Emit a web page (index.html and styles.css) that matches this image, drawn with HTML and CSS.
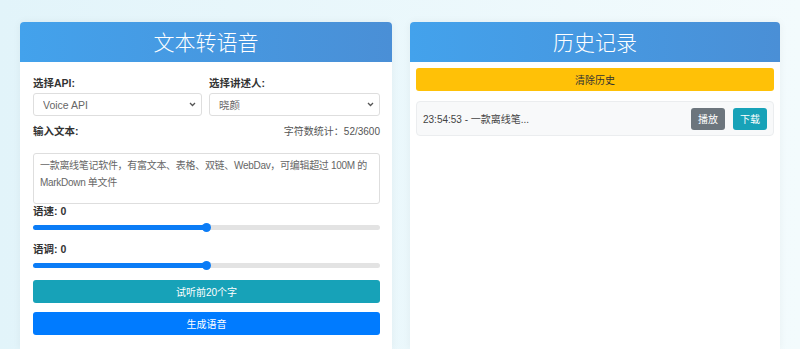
FILE: index.html
```html
<!DOCTYPE html>
<html lang="zh-CN">
<head>
    <meta charset="UTF-8">
    <meta name="viewport" content="width=device-width, initial-scale=1.0">
    <title>文本转语音</title>
    <link rel="stylesheet" href="styles.css">
</head>
<body>
    <div class="wrap">
        <!-- 左侧：文本转语音 -->
        <div class="card">
            <div class="card-head">文本转语音</div>
            <div class="card-body main-body">
                <div class="row">
                    <div class="field">
                        <label>选择API:</label>
                        <div class="select-box">
                            <select>
                                <option>Voice API</option>
                            </select>
                            <svg class="chev" width="7" height="5" viewBox="0 0 7 5"><path d="M1 1 L3.5 3.5 L6 1" fill="none" stroke="#555" stroke-width="1.3"/></svg>
                        </div>
                    </div>
                    <div class="field">
                        <label>选择讲述人:</label>
                        <div class="select-box">
                            <select>
                                <option>晓颜</option>
                            </select>
                            <svg class="chev" width="7" height="5" viewBox="0 0 7 5"><path d="M1 1 L3.5 3.5 L6 1" fill="none" stroke="#555" stroke-width="1.3"/></svg>
                        </div>
                    </div>
                </div>

                <div class="text-head">
                    <label>输入文本:</label>
                    <span class="count">字符数统计：52/3600</span>
                </div>
                <textarea class="text-input">一款离线笔记软件，有富文本、表格、双链、WebDav，可编辑超过 100M 的 MarkDown 单文件</textarea>

                <label class="range-label">语速: 0</label>
                <input type="range" class="range" min="-50" max="50" value="0">

                <label class="range-label pitch">语调: 0</label>
                <input type="range" class="range" min="-50" max="50" value="0">

                <button class="btn btn-teal btn-block">试听前20个字</button>
                <button class="btn btn-blue btn-block">生成语音</button>
            </div>
        </div>

        <!-- 右侧：历史记录 -->
        <div class="card">
            <div class="card-head">历史记录</div>
            <div class="card-body side-body">
                <button class="btn btn-yellow btn-block">清除历史</button>
                <div class="history-item">
                    <span class="history-text">23:54:53 - 一款离线笔...</span>
                    <div class="history-actions">
                        <button class="btn btn-gray btn-sm">播放</button>
                        <button class="btn btn-teal btn-sm">下载</button>
                    </div>
                </div>
            </div>
        </div>
    </div>
</body>
</html>
```

FILE: styles.css
```css
body {
    margin: 0;
    padding: 22px 20px 0;
    font-family: "Liberation Sans", "Noto Sans CJK SC", sans-serif;
    background: linear-gradient(90deg, #e2f4fa, #f3fbfd);
    color: #333;
    height: 349px;
    box-sizing: border-box;
    overflow: hidden;
}
.wrap {
    display: grid;
    grid-template-columns: 372px 370px;
    gap: 18px;
    height: 100%;
}
.card {
    background-color: white;
    border-radius: 4px 4px 0 0;
    box-shadow: 0 0 8px rgba(0, 0, 0, 0.05);
    display: flex;
    flex-direction: column;
}
.card-head {
    height: 40px;
    line-height: 39px;
    text-align: center;
    color: white;
    font-size: 21px;
    font-family: "Noto Sans CJK SC", sans-serif;
    font-weight: 300;
    background: linear-gradient(90deg, #43a2ec, #4a8fd6);
    border-radius: 4px 4px 0 0;
}
.card-body {
    flex: 1;
}
.main-body {
    padding: 12px 12px 0 13px;
}
.side-body {
    padding: 6px 6px 0;
}
label {
    display: block;
    font-size: 10.5px;
    font-weight: bold;
    color: #333;
}
.row {
    display: grid;
    grid-template-columns: 169px 171px;
    gap: 7px;
}
.field label {
    line-height: 18px;
    margin-bottom: 1px;
}
.select-box {
    position: relative;
}
.select-box select {
    width: 100%;
    height: 23px;
    appearance: none;
    -webkit-appearance: none;
    border: 1px solid #dedede;
    border-radius: 3px;
    background: white;
    font-family: inherit;
    font-size: 10.5px;
    color: #666;
    padding: 0 9px;
}
.select-box .chev {
    position: absolute;
    right: 6px;
    top: 9px;
}
.text-head {
    display: flex;
    justify-content: space-between;
    align-items: center;
    margin-top: 5px;
    height: 18px;
}
.count {
    font-size: 10px;
    color: #555;
}
.text-input {
    display: block;
    width: 100%;
    box-sizing: border-box;
    height: 51px;
    margin-top: 14px;
    border: 1px solid #dedede;
    border-radius: 3px;
    padding: 3px 6px;
    font-family: inherit;
    font-size: 10px;
    line-height: 17px;
    letter-spacing: -0.3px;
    color: #666;
    resize: none;
}
.range-label {
    line-height: 14px;
    margin-top: 0;
}
.range-label.pitch {
    margin-top: 12px;
}
.range {
    -webkit-appearance: none;
    appearance: none;
    display: block;
    width: 100%;
    height: 5px;
    margin: 7px 0 0;
    border-radius: 3px;
    background: linear-gradient(90deg, #0b7cf6 50%, #e3e3e3 50%);
    outline: none;
}
.range::-webkit-slider-thumb {
    -webkit-appearance: none;
    width: 9px;
    height: 9px;
    border-radius: 50%;
    background: #0b7cf6;
    border: none;
}
.btn {
    border: none;
    border-radius: 3px;
    font-family: inherit;
    font-size: 10px;
    color: white;
    cursor: pointer;
    padding: 0;
}
.btn-block {
    display: block;
    width: 100%;
    height: 23px;
}
.main-body .btn-teal {
    margin-top: 12px;
}
.main-body .btn-blue {
    margin-top: 9px;
}
.btn-teal {
    background-color: #17a2b8;
}
.btn-blue {
    background-color: #007bff;
}
.btn-yellow {
    background-color: #ffc107;
    color: #333;
}
.btn-gray {
    background-color: #6c757d;
}
.btn-sm {
    width: 34px;
    height: 22px;
    font-size: 10px;
}
.history-item {
    margin-top: 10px;
    height: 35px;
    box-sizing: border-box;
    display: flex;
    align-items: center;
    justify-content: space-between;
    padding: 0 6px 0 6px;
    background-color: #f8f9fa;
    border: 1px solid #ebedef;
    border-radius: 4px;
}
.history-text {
    font-size: 10px;
    color: #444;
}
.history-actions {
    display: flex;
    gap: 8px;
}
```
